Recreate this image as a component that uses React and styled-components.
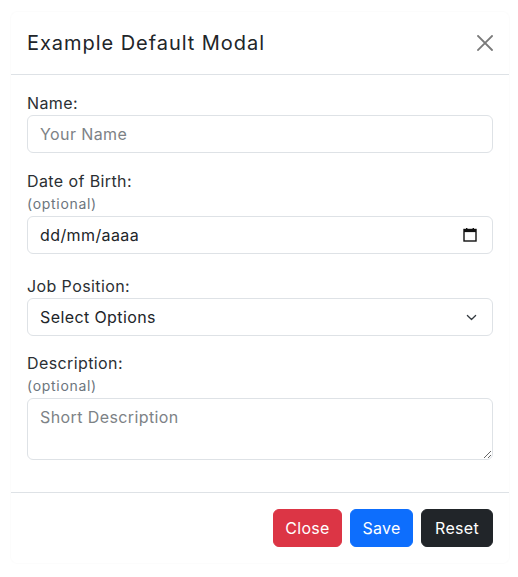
import React from "react";
import styled, { createGlobalStyle } from "styled-components";

const Global = createGlobalStyle`
  * { box-sizing: border-box; }
  html, body { margin: 0; padding: 0; background: #fff; }
  body {
    font-family: Inter, "Noto Sans", sans-serif;
    color: #212529;
    font-size: 16px;
    line-height: 1.5;
  }
`;

const Page = styled.div`
  padding: 11px 10px;
`;

const Modal = styled.div`
  width: 500px;
  background: #fff;
  border: 1px solid rgba(0, 0, 0, 0.012);
  border-radius: 8px;
  display: flex;
  flex-direction: column;
`;

const Header = styled.div`
  display: flex;
  align-items: center;
  justify-content: space-between;
  padding: 16px;
  border-bottom: 1px solid #dee2e6;
`;

const Title = styled.h5`
  margin: 0;
  font-size: 20px;
  font-weight: 400;
  line-height: 30px;
  letter-spacing: 0.95px;
  color: #212529;
`;

const CloseX = styled.button`
  width: 16px;
  height: 16px;
  padding: 0;
  border: 0;
  background: transparent;
  display: flex;
  align-items: center;
  justify-content: center;
  cursor: pointer;
  color: #7a7a7a;
`;

const Body = styled.form`
  padding: 16px;
  display: flex;
  flex-direction: column;
`;

const Group = styled.div`
  display: flex;
  flex-direction: column;
  margin-bottom: ${(p) => p.$mb ?? 16}px;
`;

const Label = styled.label`
  display: block;
  font-size: 16px;
  line-height: 24px;
  letter-spacing: 0.4px;
  color: #2b2f33;
`;

const Optional = styled.small`
  display: block;
  font-size: 14px;
  line-height: 21px;
  letter-spacing: 0.7px;
  color: #6c757d;
  margin-bottom: ${(p) => p.$mb || 0}px;
`;

const fieldBase = `
  width: 100%;
  font-family: Inter, "Noto Sans", sans-serif;
  font-size: 16px;
  line-height: 24px;
  letter-spacing: 0.4px;
  color: #212529;
  background: #fff;
  border: 1px solid #dee2e6;
  border-radius: 6px;
  padding: 6px 12px;
  outline: none;
`;

const Input = styled.input`
  ${fieldBase}
  height: 38px;
  &::placeholder { color: #7d8286; }
`;

const FieldWrap = styled.div`
  position: relative;
  display: flex;
`;

const InnerInput = styled.input`
  ${fieldBase}
  height: 38px;
  padding-right: 40px;
`;

const Select = styled.select`
  ${fieldBase}
  height: 38px;
  appearance: none;
  -webkit-appearance: none;
  padding-right: 40px;
`;

const FieldIcon = styled.span`
  position: absolute;
  top: 0;
  bottom: 0;
  right: ${(p) => p.$right}px;
  display: flex;
  align-items: center;
  pointer-events: none;
`;

const TextArea = styled.textarea`
  ${fieldBase}
  height: 62px;
  resize: vertical;
  display: block;
  &::placeholder { color: #7d8286; }
`;

const Footer = styled.div`
  display: flex;
  justify-content: flex-end;
  align-items: center;
  gap: 8px;
  padding: 16px;
  border-top: 1px solid #dee2e6;
`;

const colors = { danger: "#dc3545", primary: "#0d6efd", dark: "#212529" };

const Button = styled.button`
  width: ${(p) => p.$w}px;
  height: 38px;
  padding: 6px 0;
  border: 1px solid ${(p) => colors[p.$variant]};
  background: ${(p) => colors[p.$variant]};
  color: #fff;
  border-radius: 6px;
  font-family: Inter, "Noto Sans", sans-serif;
  font-size: 16px;
  line-height: 24px;
  letter-spacing: 0.3px;
  text-align: center;
  cursor: pointer;
`;

export default function App() {
  return (
    <>
      <Global />
      <Page>
        <Modal>
          <Header>
            <Title>Example Default Modal</Title>
            <CloseX aria-label="Close" type="button">
              <svg width="16" height="16" viewBox="0 0 16 16">
                <path d="M1 1 L15 15 M15 1 L1 15" stroke="currentColor" strokeWidth="1.8" strokeLinecap="square" fill="none" />
              </svg>
            </CloseX>
          </Header>
          <Body>
            <Group>
              <Label htmlFor="name">Name:</Label>
              <Input id="name" placeholder="Your Name" />
            </Group>
            <Group $mb={20}>
              <Label htmlFor="dob">Date of Birth:</Label>
              <Optional $mb={2}>(optional)</Optional>
              <FieldWrap>
                <InnerInput id="dob" defaultValue="dd/mm/aaaa" readOnly />
                <FieldIcon $right={16}>
                  <svg width="14" height="14" viewBox="0 0 14 14">
                    <rect x="1" y="1.5" width="12" height="11.5" fill="none" stroke="#111" strokeWidth="1.4" />
                    <rect x="1" y="1.5" width="12" height="2.6" fill="#111" />
                    <rect x="3" y="0" width="1.4" height="2" fill="#111" />
                    <rect x="9.6" y="0" width="1.4" height="2" fill="#111" />
                  </svg>
                </FieldIcon>
              </FieldWrap>
            </Group>
            <Group $mb={15}>
              <Label htmlFor="job">Job Position:</Label>
              <FieldWrap>
                <Select id="job" defaultValue="">
                  <option value="">Select Options</option>
                  <option value="dev">Developer</option>
                  <option value="des">Designer</option>
                </Select>
                <FieldIcon $right={16}>
                  <svg width="11" height="11" viewBox="0 0 16 16">
                    <path d="M2 5 L8 11 L14 5" fill="none" stroke="#343a40" strokeWidth="1.8" strokeLinecap="round" strokeLinejoin="round" />
                  </svg>
                </FieldIcon>
              </FieldWrap>
            </Group>
            <Group>
              <Label htmlFor="desc">Description:</Label>
              <Optional $mb={2}>(optional)</Optional>
              <TextArea id="desc" rows={2} placeholder="Short Description" />
            </Group>
          </Body>
          <Footer>
            <Button type="button" $variant="danger" $w={69}>Close</Button>
            <Button type="button" $variant="primary" $w={63}>Save</Button>
            <Button type="button" $variant="dark" $w={72}>Reset</Button>
          </Footer>
        </Modal>
      </Page>
    </>
  );
}
